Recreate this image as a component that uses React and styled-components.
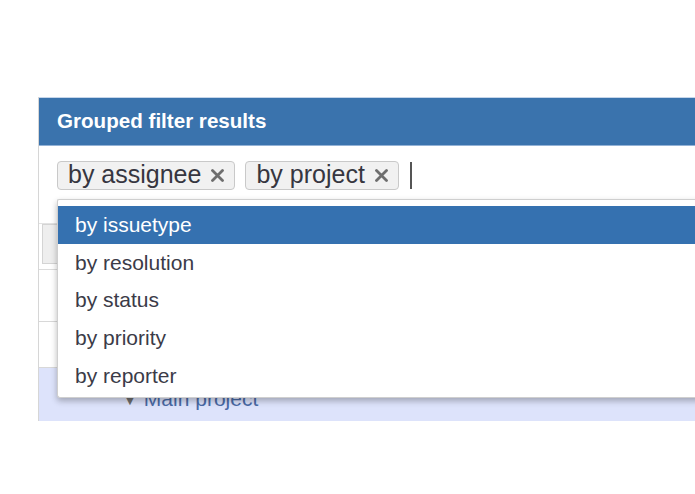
import React from 'react';
import styled, { createGlobalStyle } from 'styled-components';

const GlobalStyle = createGlobalStyle`
  html, body {
    margin: 0;
    padding: 0;
    background: #ffffff;
    overflow: hidden;
  }
  body {
    font-family: "Liberation Sans", Arial, sans-serif;
    color: #333;
  }
`;

const Page = styled.div`
  padding: 97px 0 0 38px;
  width: 695px;
  height: 494px;
  box-sizing: border-box;
  overflow: hidden;
`;

const Panel = styled.section`
  position: relative;
  width: 720px;
  height: 324px;
  border-left: 1px solid #d6d6d6;
  box-sizing: border-box;
  display: flex;
  flex-direction: column;
`;

const Header = styled.header`
  height: 49px;
  box-sizing: border-box;
  background: #3a73ad;
  border-top: 1px solid #c6d6ea;
  border-bottom: 1px solid #93b2d6;
  display: flex;
  align-items: center;
  padding: 0 0 2px 18px;
  color: #ffffff;
  font-weight: bold;
  font-size: 20.6px;
`;

const FilterBar = styled.div`
  display: flex;
  align-items: center;
  gap: 10px;
  padding: 15px 18px 10px;
  height: 54px;
  box-sizing: border-box;
`;

const Tag = styled.span`
  display: inline-flex;
  align-items: center;
  gap: 10px;
  height: 29px;
  box-sizing: border-box;
  padding: 0 10px 0 10px;
  border: 1px solid #c9c9c9;
  border-radius: 4px;
  background: #f1f1f1;
  font-size: 25px;
  line-height: 1;
  color: #363640;
`;

const TagLabel = styled.span`
  position: relative;
  top: -1px;
`;

const Cursor = styled.span`
  display: inline-block;
  width: 2px;
  height: 27px;
  background: #555;
  margin-left: 1px;
`;

const Spacer = styled.div`
  height: 24px;
  border-bottom: 1px solid #e2e2e2;
  box-sizing: border-box;
`;

const ButtonRow = styled.div`
  height: 46px;
  box-sizing: border-box;
  border-bottom: 1px solid #dcdcdc;
  padding: 0 0 5px 3px;
  display: flex;
`;

const GreyButton = styled.div`
  flex: 1;
  background: #eeeeee;
  border: 1px solid #d4d4d4;
  border-right: none;
`;

const PlainRow = styled.div`
  height: ${p => p.$h}px;
  box-sizing: border-box;
  border-bottom: 1px solid #d8d8d8;
`;

const GroupRow = styled.div`
  flex: 1;
  background: #dde3fb;
  display: flex;
  align-items: flex-start;
  gap: 7px;
  padding: 19px 0 0 84px;
  font-size: 21px;
  line-height: 24px;
  color: #4a6aa6;
`;

const Caret = styled.span`
  font-size: 14px;
  color: #6e6e6e;
  line-height: 24px;
  position: relative;
  top: 1px;
`;

const Dropdown = styled.ul`
  position: absolute;
  top: 102px;
  left: 18px;
  right: -40px;
  margin: 0;
  padding: 6px 0 2px;
  list-style: none;
  background: #ffffff;
  border: 1px solid #cfcfcf;
  border-right: none;
  border-radius: 2px 0 0 3px;
  box-shadow: 0 3px 6px rgba(0, 0, 0, 0.28);
`;

const Option = styled.li`
  height: 37.75px;
  display: flex;
  align-items: center;
  padding-left: 17px;
  font-size: 21px;
  color: ${p => (p.$active ? '#ffffff' : '#3b3b48')};
  background: ${p => (p.$active ? '#3571b0' : 'transparent')};
`;

const Close = () => (
  <svg width="13" height="13" viewBox="0 0 13 13" style={{ flexShrink: 0 }}>
    <path d="M1.5 1.5 L11.5 11.5 M11.5 1.5 L1.5 11.5" stroke="#6e6e6e" strokeWidth="2.8" strokeLinecap="round" />
  </svg>
);

const tags = ['by assignee', 'by project'];
const options = ['by issuetype', 'by resolution', 'by status', 'by priority', 'by reporter'];

export default function App() {
  return (
    <>
      <GlobalStyle />
      <Page>
        <Panel>
          <Header>Grouped filter results</Header>
          <FilterBar>
            {tags.map(t => (
              <Tag key={t}>
                <TagLabel>{t}</TagLabel>
                <Close />
              </Tag>
            ))}
            <Cursor />
          </FilterBar>
          <Spacer />
          <ButtonRow>
            <GreyButton />
          </ButtonRow>
          <PlainRow $h={52} />
          <PlainRow $h={46} />
          <GroupRow>
            <Caret>▼</Caret>
            <span>Main project</span>
          </GroupRow>
          <Dropdown>
            {options.map((o, i) => (
              <Option key={o} $active={i === 0}>
                {o}
              </Option>
            ))}
          </Dropdown>
        </Panel>
      </Page>
    </>
  );
}
